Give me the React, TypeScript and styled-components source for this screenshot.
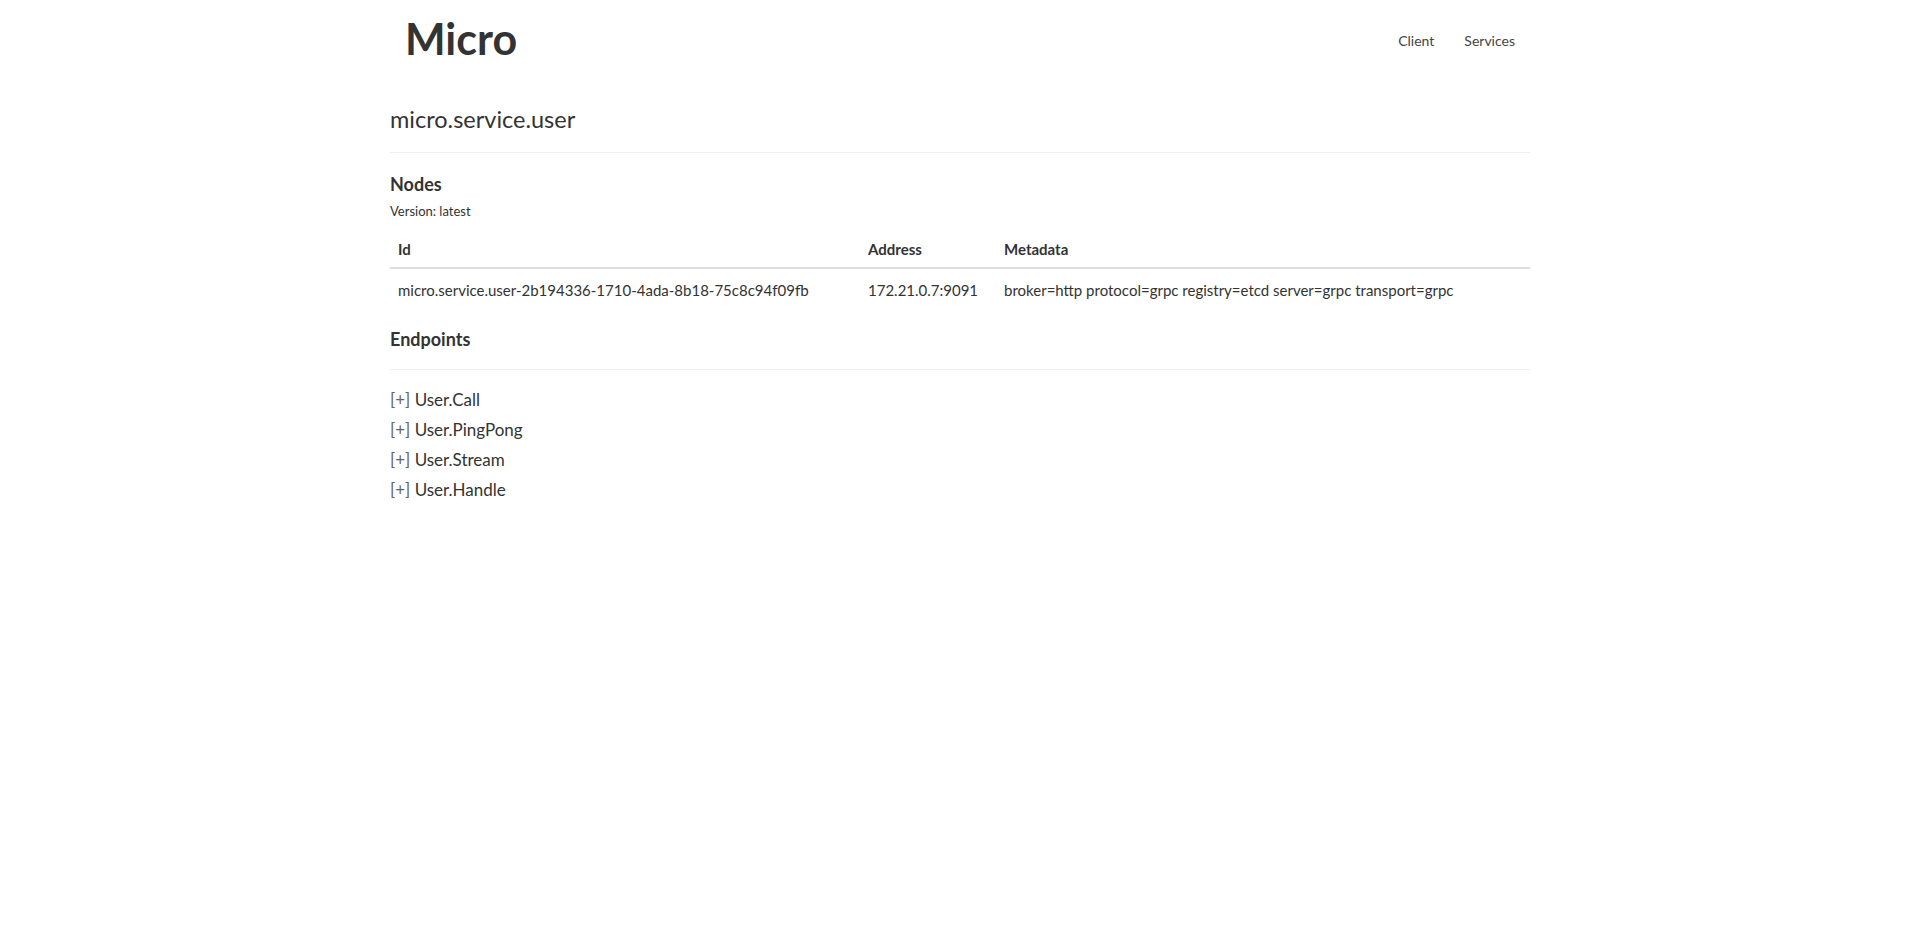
import React from 'react'
import styled, { createGlobalStyle, css } from 'styled-components'

const GlobalStyle = createGlobalStyle`
  html, body {
    margin: 0;
    padding: 0;
    background: #fff;
  }
  body {
    font-family: Lato, "Liberation Sans", sans-serif;
    font-size: 15px;
    line-height: 1.42857;
    color: #333;
  }
  * {
    box-sizing: border-box;
  }
`

const Navbar = styled.header(
  () => css`
    height: 80px;
  `,
)

const Container = styled.div(
  () => css`
    width: 1170px;
    margin: 0 auto;
    padding: 0 15px;
  `,
)

const NavInner = styled(Container)(
  () => css`
    height: 100%;
    display: flex;
    align-items: center;
    justify-content: space-between;
  `,
)

const Brand = styled.a(
  () => css`
    padding: 0 15px;
    font-size: 43px;
    font-weight: 700;
    line-height: 1;
    color: #333;
    text-decoration: none;
    margin-top: -4px;
  `,
)

const NavLinks = styled.nav(
  () => css`
    display: flex;
    margin-top: 2px;
  `,
)

const NavLink = styled.a(
  () => css`
    padding: 0 15px;
    font-size: 14px;
    line-height: 20px;
    color: #444;
    text-decoration: none;
  `,
)

const Title = styled.h3(
  () => css`
    margin: 26px 0 0;
    font-size: 23.5px;
    font-weight: 400;
    line-height: 26.4px;
    color: #333;
  `,
)

const Rule = styled.hr<{ $top: number }>(
  ({ $top }) => css`
    margin: ${$top}px 0 0;
    border: 0;
    border-top: 1px solid #eee;
  `,
)

const SectionTitle = styled.h4<{ $top: number }>(
  ({ $top }) => css`
    margin: ${$top}px 0 0;
    font-size: 18px;
    font-weight: 700;
    line-height: 19.8px;
    color: #333;
  `,
)

const Version = styled.small(
  () => css`
    display: block;
    margin-top: 6px;
    font-size: 13px;
    line-height: 20px;
    color: #333;
  `,
)

const Table = styled.table(
  () => css`
    width: 100%;
    margin-top: 10px;
    border-collapse: collapse;
    border-spacing: 0;
    table-layout: fixed;
  `,
)

const Th = styled.th<{ $width?: number }>(
  ({ $width }) => css`
    ${$width ? `width: ${$width}px;` : ''}
    padding: 8px;
    text-align: left;
    font-weight: 700;
    line-height: 20px;
    border-bottom: 2px solid #ddd;
    vertical-align: bottom;
  `,
)

const Td = styled.td(
  () => css`
    padding: 10px 8px;
    line-height: 22px;
    border-top: 1px solid #ddd;
    vertical-align: top;
    white-space: nowrap;
  `,
)

const EndpointList = styled.div(
  () => css`
    margin-top: 15px;
  `,
)

const Endpoint = styled.a(
  () => css`
    display: block;
    font-size: 17px;
    line-height: 30px;
    color: #333;
    text-decoration: none;
    cursor: pointer;
  `,
)

const Toggle = styled.span(
  () => css`
    color: #666;
  `,
)

const endpoints = ['User.Call', 'User.PingPong', 'User.Stream', 'User.Handle']

export default function App() {
  return (
    <>
      <GlobalStyle />
      <Navbar>
        <NavInner>
          <Brand href="#">Micro</Brand>
          <NavLinks>
            <NavLink href="#">Client</NavLink>
            <NavLink href="#">Services</NavLink>
          </NavLinks>
        </NavInner>
      </Navbar>
      <Container>
        <Title>micro.service.user</Title>
        <Rule $top={20} />
        <SectionTitle $top={22}>Nodes</SectionTitle>
        <Version>Version: latest</Version>
        <Table>
          <thead>
            <tr>
              <Th $width={470}>Id</Th>
              <Th $width={136}>Address</Th>
              <Th>Metadata</Th>
            </tr>
          </thead>
          <tbody>
            <tr>
              <Td>micro.service.user-2b194336-1710-4ada-8b18-75c8c94f09fb</Td>
              <Td>172.21.0.7:9091</Td>
              <Td>broker=http protocol=grpc registry=etcd server=grpc transport=grpc</Td>
            </tr>
          </tbody>
        </Table>
        <SectionTitle $top={19}>Endpoints</SectionTitle>
        <Rule $top={19} />
        <EndpointList>
          {endpoints.map((name) => (
            <Endpoint key={name} href="#">
              <Toggle>[+]</Toggle> {name}
            </Endpoint>
          ))}
        </EndpointList>
      </Container>
    </>
  )
}
